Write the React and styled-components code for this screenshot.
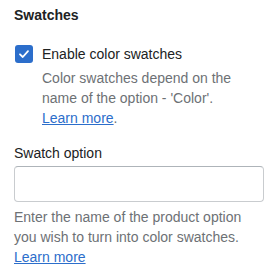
import styled, { createGlobalStyle } from 'styled-components';

const GlobalStyle = createGlobalStyle`
  body {
    margin: 0;
    background: #fff;
    font-family: "Liberation Sans", Arial, sans-serif;
    color: #202223;
  }
`;

const Panel = styled.section`
  width: 280px;
  padding: 5px 16px 0 14px;
  box-sizing: border-box;
  font-size: 14px;
  line-height: 20px;
`;

const Heading = styled.h3`
  margin: 0 0 19px;
  font-size: 14px;
  font-weight: 600;
  line-height: 20px;
`;

const CheckRow = styled.label`
  display: flex;
  align-items: center;
  gap: 9px;
  padding-left: 1px;
  height: 20px;
  cursor: pointer;
`;

const Box = styled.span`
  width: 18px;
  height: 18px;
  border-radius: 3px;
  background: #2c6ecb;
  display: flex;
  align-items: center;
  justify-content: center;
  flex-shrink: 0;
`;

const Help = styled.p`
  margin: ${(p) => p.$top || 0}px 0 0 ${(p) => p.$indent || 0}px;
  color: #6d7175;
`;

const Link = styled.a`
  color: #2c6ecb;
  text-decoration: underline;
`;

const FieldLabel = styled.div`
  margin-top: 15px;
`;

const Input = styled.input`
  display: block;
  width: 250px;
  height: 36px;
  margin-top: 3px;
  box-sizing: border-box;
  border: 1px solid #c9cccf;
  border-top-color: #aeb4b9;
  border-radius: 4px;
  background: #fff;
  font: inherit;
`;

const App = () => {
  return (
    <Panel>
      <GlobalStyle />
      <Heading>Swatches</Heading>
      <CheckRow>
        <Box>
          <svg width="12" height="12" viewBox="0 0 12 12">
            <path d="M2 6.3 L4.8 9 L10 3.2" fill="none" stroke="#fff" strokeWidth="1.8" strokeLinecap="round" strokeLinejoin="round" />
          </svg>
        </Box>
        Enable color swatches
      </CheckRow>
      <Help $top={4} $indent={28}>
        Color swatches depend on the name of the option - 'Color'.
        <br />
        <Link href="#">Learn more</Link>.
      </Help>
      <FieldLabel>Swatch option</FieldLabel>
      <Input type="text" />
      <Help $top={5}>
        Enter the name of the product option you wish to turn into color swatches.
        <br />
        <Link href="#">Learn more</Link>
      </Help>
    </Panel>
  );
};

export default App;
